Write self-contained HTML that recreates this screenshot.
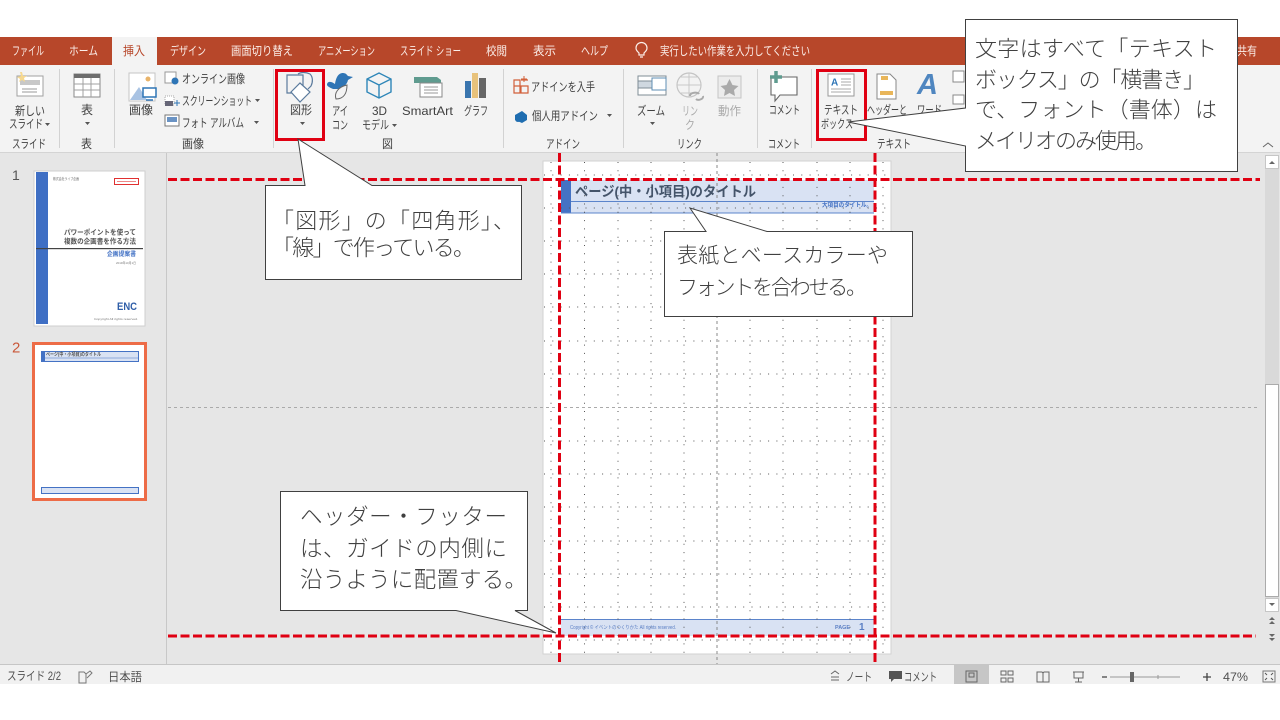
<!DOCTYPE html>
<html lang="ja"><head><meta charset="utf-8"><title>PowerPoint</title>
<style>
html,body{margin:0;padding:0;background:#fff;width:1280px;height:720px;overflow:hidden}
svg{display:block}
text{font-family:"Liberation Sans","Noto Sans CJK JP",sans-serif;dominant-baseline:central;font-size:12px;fill:#404040}
.t text{fill:#fbeee9;font-size:12px}
.c text{fill:#404040;font-weight:300}
.g{fill:#505050}
.d{fill:#aaa}
</style></head><body>
<svg width="1280" height="720" viewBox="0 0 1280 720" xmlns="http://www.w3.org/2000/svg">
<rect width="1280" height="720" fill="#fff"/>
<rect y="37" width="1280" height="28" fill="#B7472A"/>
<rect y="65" width="1280" height="87" fill="#F3F3F3"/>
<rect y="152" width="1280" height="513" fill="#E6E6E6"/>
<rect y="152" width="1280" height="1" fill="#d4d4d4"/>
<rect x="166" y="153" width="1" height="511" fill="#c8c8c8"/>
<rect y="664" width="1280" height="1" fill="#c6c6c6"/>
<rect y="665" width="1280" height="19" fill="#F1F1F1"/>
<rect x="112" y="37" width="45" height="28" fill="#F3F3F3"/>

<g class="t">
<text x="12" y="51" textLength="32" lengthAdjust="spacingAndGlyphs">ファイル</text>
<text x="69" y="51" textLength="29" lengthAdjust="spacingAndGlyphs">ホーム</text>
<text x="123" y="51" textLength="22" lengthAdjust="spacingAndGlyphs" style="fill:#B7472A">挿入</text>
<text x="170" y="51" textLength="36" lengthAdjust="spacingAndGlyphs">デザイン</text>
<text x="231" y="51" textLength="62" lengthAdjust="spacingAndGlyphs">画面切り替え</text>
<text x="318" y="51" textLength="57" lengthAdjust="spacingAndGlyphs">アニメーション</text>
<text x="400" y="51" textLength="61" lengthAdjust="spacingAndGlyphs">スライド ショー</text>
<text x="486" y="51" textLength="21" lengthAdjust="spacingAndGlyphs">校閲</text>
<text x="533" y="51" textLength="23" lengthAdjust="spacingAndGlyphs">表示</text>
<text x="581" y="51" textLength="27" lengthAdjust="spacingAndGlyphs">ヘルプ</text>
<text x="660" y="51" textLength="150" lengthAdjust="spacingAndGlyphs">実行したい作業を入力してください</text>
<text x="1237" y="51" textLength="20" lengthAdjust="spacingAndGlyphs">共有</text>
</g>
<path d="M639 53c-2-2-3-3-3-5a5.500 5.500 0 0 1 11 0c0 2-1 3-3 5v2h-5zM640 57h3" fill="none" stroke="#fbeee9" stroke-width="1.200"/>

<!-- ribbon separators -->
<g fill="#d2d2d2">
<rect x="59" y="69" width="1" height="79"/><rect x="114" y="69" width="1" height="79"/><rect x="273" y="69" width="1" height="79"/><rect x="503" y="69" width="1" height="79"/><rect x="623" y="69" width="1" height="79"/><rect x="757" y="69" width="1" height="79"/><rect x="811" y="69" width="1" height="79"/>
</g>

<!-- ribbon labels -->
<g>
<text x="15" y="111" textLength="30" lengthAdjust="spacingAndGlyphs">新しい</text>
<text x="9" y="124" textLength="34" lengthAdjust="spacingAndGlyphs">スライド</text>
<text x="12" y="144" textLength="34" lengthAdjust="spacingAndGlyphs">スライド</text>
<text x="81" y="110" textLength="12" lengthAdjust="spacingAndGlyphs">表</text>
<text x="81" y="144" textLength="11" lengthAdjust="spacingAndGlyphs">表</text>
<text x="129" y="110" textLength="24" lengthAdjust="spacingAndGlyphs">画像</text>
<text x="182" y="79" textLength="63" lengthAdjust="spacingAndGlyphs">オンライン画像</text>
<text x="182" y="101" textLength="70" lengthAdjust="spacingAndGlyphs">スクリーンショット</text>
<text x="182" y="123" textLength="62" lengthAdjust="spacingAndGlyphs">フォト アルバム</text>
<text x="182" y="144" textLength="22" lengthAdjust="spacingAndGlyphs">画像</text>
<text x="290" y="110" textLength="22" lengthAdjust="spacingAndGlyphs">図形</text>
<text x="332" y="111" textLength="16" lengthAdjust="spacingAndGlyphs">アイ</text>
<text x="332" y="125" textLength="16" lengthAdjust="spacingAndGlyphs">コン</text>
<text x="372" y="111" textLength="15" lengthAdjust="spacingAndGlyphs">3D</text>
<text x="362" y="125" textLength="27" lengthAdjust="spacingAndGlyphs">モデル</text>
<text x="402" y="111" textLength="51" lengthAdjust="spacingAndGlyphs">SmartArt</text>
<text x="464" y="111" textLength="24" lengthAdjust="spacingAndGlyphs">グラフ</text>
<text x="382" y="144" textLength="11" lengthAdjust="spacingAndGlyphs">図</text>
<text x="531" y="87" textLength="64" lengthAdjust="spacingAndGlyphs">アドインを入手</text>
<text x="532" y="116" textLength="66" lengthAdjust="spacingAndGlyphs">個人用アドイン</text>
<text x="546" y="144" textLength="34" lengthAdjust="spacingAndGlyphs">アドイン</text>
<text x="637" y="111" textLength="28" lengthAdjust="spacingAndGlyphs">ズーム</text>
<text x="682" y="111" textLength="16" lengthAdjust="spacingAndGlyphs" class="d">リン</text>
<text x="685" y="125" textLength="10" lengthAdjust="spacingAndGlyphs" class="d">ク</text>
<text x="718" y="111" textLength="23" lengthAdjust="spacingAndGlyphs" class="d">動作</text>
<text x="677" y="144" textLength="25" lengthAdjust="spacingAndGlyphs">リンク</text>
<text x="769" y="110" textLength="31" lengthAdjust="spacingAndGlyphs">コメント</text>
<text x="768" y="144" textLength="32" lengthAdjust="spacingAndGlyphs">コメント</text>
<text x="824" y="110" textLength="34" lengthAdjust="spacingAndGlyphs">テキスト</text>
<text x="821" y="124" textLength="32" lengthAdjust="spacingAndGlyphs">ボックス</text>
<text x="867" y="110" textLength="40" lengthAdjust="spacingAndGlyphs">ヘッダーと</text>
<text x="917" y="110" textLength="25" lengthAdjust="spacingAndGlyphs">ワード</text>
<text x="877" y="144" textLength="34" lengthAdjust="spacingAndGlyphs">テキスト</text>
</g>
<g fill="#555">
<path d="M45 123h5l-2.500 3zM85 122h5l-2.500 3zM255 99h5l-2.500 3zM254 121h5l-2.500 3zM300 122h5l-2.500 3zM392 124h5l-2.500 3zM607 114h5l-2.500 3zM650 122h5l-2.500 3z"/>
</g>

<!-- ribbon icons -->
<rect x="17" y="76" width="26" height="20" fill="#fff" stroke="#a0a0a0"/><rect x="20" y="80" width="20" height="5" fill="#c8c8c8"/><path d="M22 89h15M22 92h15" stroke="#999"/><path d="M20 72l1 4-4 1 3 2-1 3 3-2 3 2-1-4 3-2-4 0-1-4z" fill="#f6d88f"/>
<rect x="74" y="74" width="26" height="23" fill="#fff" stroke="#8a8a8a"/><rect x="74" y="74" width="26" height="4" fill="#6d6d6d"/><path d="M74 84h26M74 90h26M83 78v19M91 78v19" stroke="#a0a0a0"/>
<rect x="129" y="73" width="26" height="28" fill="#fff" stroke="#c4c4c4"/><path d="M130 100l9-13 8 13z" fill="#a9c3e3"/><circle cx="148" cy="79" r="2.500" fill="#e9b46a"/><rect x="143" y="88" width="13" height="9" fill="#fff" stroke="#2e75b6" stroke-width="1.500"/><path d="M146 100h7" stroke="#2e75b6" stroke-width="1.500"/>
<rect x="165" y="72" width="11" height="11" fill="#fff" stroke="#999"/><circle cx="175" cy="81" r="3.500" fill="#2e75b6"/>
<rect x="165" y="96" width="9" height="9" fill="#fff" stroke="#aaa" stroke-dasharray="1 1"/><rect x="165" y="101" width="8" height="5" fill="#667"/><path d="M174 103h6M177 100v6" stroke="#2e75b6"/>
<rect x="165" y="115" width="14" height="11" fill="#fff" stroke="#777"/><rect x="167" y="117" width="10" height="5" fill="#6a93c4"/>
<path d="M287 75h16v18h-16z" fill="none" stroke="#5b7b9d" stroke-width="1.200"/><path d="M298 74c3-2 8-2 12 0 3 3 3 8 1 12l-3 3" fill="none" stroke="#5b7b9d" stroke-width="1.200"/><path d="M291 92l9-9 10 9-10 10z" fill="#fff" stroke="#5b7b9d" stroke-width="1.200"/>
<path d="M327 85c0-4 4-4 8-1 1-6 3-11 8-11 3 0 4 2 5 3l5 1-5 3c-1 5-6 9-10 9h-5c-2-1-5-2-6-4z" fill="#2f75b5"/><path d="M336 99c-2-6 2-12 11-14 0 8-3 14-11 14z" fill="#f3f3f3" stroke="#666"/>
<path d="M379 73l12 6v13l-12 6-12-6V79zM367 79l12 6 12-6M379 85v13" fill="none" stroke="#2e86b8" stroke-width="1.400"/>
<path d="M414 77h23l4 3v3h-27z" fill="#5f9b8f"/><rect x="420" y="83" width="22" height="14" fill="#fff" stroke="#888"/><path d="M424 87h14M424 90h14M424 93h14" stroke="#999"/>
<rect x="465" y="81" width="6" height="17" fill="#3a75ae"/><rect x="472" y="73" width="6" height="25" fill="#e8c27b"/><rect x="479" y="78" width="7" height="20" fill="#666"/>
<path d="M514 80h6v6h-6zM514 86h6v7h-6zM521 86h7v7h-7zM521 80h7" fill="none" stroke="#d2603a" stroke-width="1.200"/><path d="M524 76v6M521 79h6" stroke="#d2603a"/>
<path d="M515 115l7-4 5 4v5l-5 3-7-3z" fill="#1f6db0"/><circle cx="518" cy="119" r="3" fill="#1f6db0"/>
<rect x="638" y="76" width="28" height="19" fill="#fff" stroke="#7f8c96"/><rect x="638" y="81" width="14" height="7" fill="#cfd8e0" stroke="#7f8c96"/><rect x="652" y="78" width="14" height="12" fill="#fff" stroke="#5f8fb4"/>
<circle cx="689" cy="85" r="12" fill="none" stroke="#c4c4c4" stroke-width="1.200"/><path d="M677 85h24M689 73v24M681 77h16M681 93h16" stroke="#c8c8c8"/><path d="M690 96c0-4 8-4 9-2M696 99c2 2 8 0 7-3" fill="none" stroke="#aaa" stroke-width="2"/>
<rect x="718" y="76" width="23" height="22" fill="#ececec" stroke="#c4c4c4"/><path d="M729.500 79l3 6 6 1-4.500 4 1 6-5.500-3-5.500 3 1-6-4.500-4 6-1z" fill="#aaa"/>
<path d="M771 77h26v18h-17l-5 6v-6h-4z" fill="#fff" stroke="#666" stroke-width="1.100"/><path d="M776 71v12M770 77h12" stroke="#5f9b8f" stroke-width="3.500"/>
<rect x="828" y="74" width="26" height="22" fill="#fff" stroke="#999"/><text x="831" y="83" style="font-size:10px;fill:#2e75b6;font-weight:bold">A</text><path d="M841 79h10M841 82h10M841 85h10M831 89h20M831 92h20" stroke="#aaa"/>
<path d="M877 74h13l6 6v19h-19z" fill="#fff" stroke="#888"/><rect x="881" y="76" width="7" height="4" fill="#e9b65a"/><rect x="880" y="91" width="13" height="4" fill="#e9b65a"/>
<text x="917" y="85" style="font-size:29px;font-style:italic;font-weight:bold;fill:#4f86c0">A</text>
<rect x="953" y="71" width="11" height="11" fill="#fff" stroke="#888"/><rect x="953" y="95" width="11" height="9" fill="#fff" stroke="#888"/>

<!-- thumbnails -->
<text x="12" y="175" style="font-size:14px;fill:#555">1</text>
<text x="12" y="348" style="font-size:15px;fill:#C9583A">2</text>
<rect x="34" y="171" width="111" height="155" fill="#fff" stroke="#cfcfcf"/>
<rect x="36" y="172" width="12" height="152" fill="#3F6FC4"/>
<rect x="36" y="248" width="107" height="1.200" fill="#444"/>
<text x="53" y="179" textLength="26" lengthAdjust="spacingAndGlyphs" style="font-size:3.500px;fill:#666">株式会社ライブ企画</text>
<rect x="114.500" y="178.500" width="24" height="6" fill="#fff" stroke="#e03030"/><rect x="117" y="181" width="19" height="1" fill="#e88"/>
<text x="64" y="233" textLength="72" lengthAdjust="spacingAndGlyphs" style="font-size:7px;font-weight:bold;fill:#555">パワーポイントを使って</text>
<text x="64" y="242" textLength="72" lengthAdjust="spacingAndGlyphs" style="font-size:7px;font-weight:bold;fill:#555">複数の企画書を作る方法</text>
<text x="107" y="255" textLength="29" lengthAdjust="spacingAndGlyphs" style="font-size:6px;font-weight:bold;fill:#3F6FC4">企画提案書</text>
<text x="116" y="263" textLength="20" lengthAdjust="spacingAndGlyphs" style="font-size:3px;fill:#777">2019年10月1日</text>
<text x="117" y="307" textLength="20" lengthAdjust="spacingAndGlyphs" style="font-size:11px;font-weight:bold;fill:#2f5ea8">ENC</text>
<text x="94" y="319" textLength="44" lengthAdjust="spacingAndGlyphs" style="font-size:3px;fill:#777">Copyright All rights reserved.</text>

<rect x="33.500" y="343.500" width="112" height="156" fill="#fff" stroke="#ED6C47" stroke-width="3"/>
<rect x="41.500" y="351.500" width="97" height="10" fill="#D9E2F3" stroke="#4472C4"/><rect x="41" y="351" width="4" height="11" fill="#4472C4"/><path d="M45 358h94" stroke="#4472C4" stroke-width=".6"/>
<text x="46" y="355" textLength="55" lengthAdjust="spacingAndGlyphs" style="font-size:5px;fill:#555;font-weight:bold">ページ(中・小項目)のタイトル</text>
<rect x="41.500" y="487.500" width="97" height="6" fill="#D9E2F3" stroke="#4472C4"/>

<!-- slide -->
<rect x="543" y="161" width="348" height="493" fill="#fff" stroke="#d2d2d2"/>
<rect x="561" y="180" width="313" height="33" fill="#D9E2F3"/>
<rect x="561" y="180" width="10" height="33" fill="#4472C4"/>
<path d="M571 201.500h303M561 213h313" stroke="#5B84CB" stroke-width="1"/>
<rect x="561" y="619" width="313" height="17" fill="#D9E2F3"/>
<path d="M561 619.500h313" stroke="#5B84CB"/>
<g stroke="#555" stroke-width="1" stroke-dasharray="1 7.300" fill="none">
<path d="M551 162V654M584.500 162V654M618 162V654M651 162V654M684 162V654M750 162V654M783 162V654M817 162V654M850 162V654M883 162V654"/>
<path d="M544 175H890M544 208H890M544 241H890M544 274H890M544 307H890M544 341H890M544 374H890M544 441H890M544 474H890M544 507H890M544 541H890M544 574H890M544 607H890M544 640H890"/>
</g>
<text x="575" y="191.500" textLength="181" lengthAdjust="spacingAndGlyphs" style="font-size:14px;font-weight:bold;fill:#44546A">ページ(中・小項目)のタイトル</text>
<text x="822" y="206" textLength="50" lengthAdjust="spacingAndGlyphs" style="font-size:6px;font-weight:bold;fill:#4472C4">大項目のタイトル。</text>
<text x="570" y="628" textLength="106" lengthAdjust="spacingAndGlyphs" style="font-size:5px;fill:#5B7FC4">Copyright © イベントのつくりかた All rights reserved.</text>
<text x="835" y="628" textLength="15" lengthAdjust="spacingAndGlyphs" style="font-size:5.500px;font-weight:bold;fill:#5B7FC4">PAGE</text>
<text x="859" y="627.500" style="font-size:10px;font-weight:bold;fill:#5B7FC4">1</text>
<path d="M717 153V664" stroke="#888" stroke-dasharray="3 3"/>
<path d="M168 407.500H1260" stroke="#aaa" stroke-dasharray="3 3"/>

<!-- red guides -->
<g stroke="#E00012" stroke-width="3" stroke-dasharray="9 3.500" fill="none">
<path d="M168 179.500H1260M168 636H1256M559.500 153V664M875 153V664"/>
</g>

<!-- scrollbar -->
<rect x="1265" y="155" width="14" height="456" fill="#D9D9D9"/>
<rect x="1265.500" y="155.500" width="13" height="13" fill="#fff" stroke="#c6c6c6"/><path d="M1269 164h6l-3-3z" fill="#666"/>
<rect x="1265.500" y="384.500" width="13" height="212" fill="#fff" stroke="#ababab"/>
<rect x="1265.500" y="598.500" width="13" height="13" fill="#fff" stroke="#c6c6c6"/><path d="M1269 603h6l-3 3z" fill="#666"/>
<path d="M1269 620l3-3 3 3zM1269 624l3-3 3 3zM1268 617h8" fill="#666"/>
<path d="M1269 634l3 3 3-3zM1269 638l3 3 3-3zM1268 641h8" fill="#666"/>
<path d="M1263 147l5-4 5 4" fill="none" stroke="#666"/>

<!-- red highlight boxes -->
<rect x="276.500" y="70.500" width="47" height="69" fill="none" stroke="#E00012" stroke-width="3"/>
<rect x="817.500" y="70.500" width="48" height="69" fill="none" stroke="#E00012" stroke-width="3"/>

<!-- callouts -->
<g fill="#fff" stroke="#404040" stroke-width="1">
<path d="M265.500 185.500H305L298 139L372 185.500H521.500V279.500H265.500Z"/>
<path d="M664.500 231.500H706L690 208L767 231.500H912.500V316.500H664.500Z"/>
<path d="M280.500 491.500H527.500V610.500H515L556 633L456 610.500H280.500Z"/>
<path d="M965.500 19.500H1237.500V171.500H965.500V146L848 122L965.500 108Z"/>
</g>
<g class="c">
<text x="272" y="221" style="font-size:22px" textLength="243">「図形」の「四角形」、</text>
<text x="272" y="248" style="font-size:22px" textLength="203">「線」で作っている。</text>
<text x="677" y="256" style="font-size:21px" textLength="211">表紙とベースカラーや</text>
<text x="677" y="288" style="font-size:21px" textLength="190">フォントを合わせる。</text>
<text x="300" y="517" style="font-size:22.500px" textLength="207">ヘッダー・フッター</text>
<text x="300" y="549" style="font-size:22.500px" textLength="207">は、ガイドの内側に</text>
<text x="300" y="580" style="font-size:22.500px" textLength="227">沿うように配置する。</text>
<text x="975" y="49" style="font-size:22px" textLength="242">文字はすべて「テキスト</text>
<text x="975" y="80" style="font-size:22px" textLength="230">ボックス」の「横書き」</text>
<text x="975" y="110" style="font-size:22px" textLength="242">で、フォント（書体）は</text>
<text x="975" y="141" style="font-size:22px" textLength="182">メイリオのみ使用。</text>
</g>

<!-- status bar -->
<text x="7" y="676" textLength="54" lengthAdjust="spacingAndGlyphs" class="g">スライド 2/2</text>
<path d="M79 672h5l2 2v9h-7zM86 674l4-3 2 2-5 5" fill="none" stroke="#777"/>
<text x="108" y="677" textLength="34" lengthAdjust="spacingAndGlyphs" class="g">日本語</text>
<path d="M831 674l4-3 4 3M831 677h8M831 680h8" fill="none" stroke="#666"/>
<text x="846" y="677" textLength="26" lengthAdjust="spacingAndGlyphs" class="g">ノート</text>
<path d="M889 671h13v8h-8l-3 3v-3h-2z" fill="#555"/>
<text x="904" y="677" textLength="33" lengthAdjust="spacingAndGlyphs" class="g">コメント</text>
<rect x="954" y="665" width="35" height="19" fill="#C6C6C6"/>
<rect x="966" y="671" width="11" height="11" fill="none" stroke="#666"/><rect x="969" y="673" width="5" height="4" fill="none" stroke="#666"/>
<path d="M1001 671h5v4h-5zM1008 671h5v4h-5zM1001 678h5v4h-5zM1008 678h5v4h-5z" fill="none" stroke="#666"/>
<path d="M1037 672h5l1 1 1-1h5v10h-12zM1043 673v9" fill="none" stroke="#666"/>
<path d="M1073 672h11M1074 672v6h9v-6M1078.500 678v4M1075 682h7" fill="none" stroke="#666"/>
<path d="M1110 677h70M1158 675v4" stroke="#999"/>
<path d="M1102 677h5M1207 673v8M1203 677h8" stroke="#444" stroke-width="1.300"/>
<rect x="1130" y="672" width="4" height="10" fill="#666"/>
<text x="1223" y="677" textLength="25" lengthAdjust="spacingAndGlyphs" class="g">47%</text>
<rect x="1263" y="671" width="12" height="11" fill="none" stroke="#777"/><path d="M1265 673l2 2M1273 673l-2 2M1265 680l2-2M1273 680l-2-2" stroke="#555"/>
</svg>
</body></html>
